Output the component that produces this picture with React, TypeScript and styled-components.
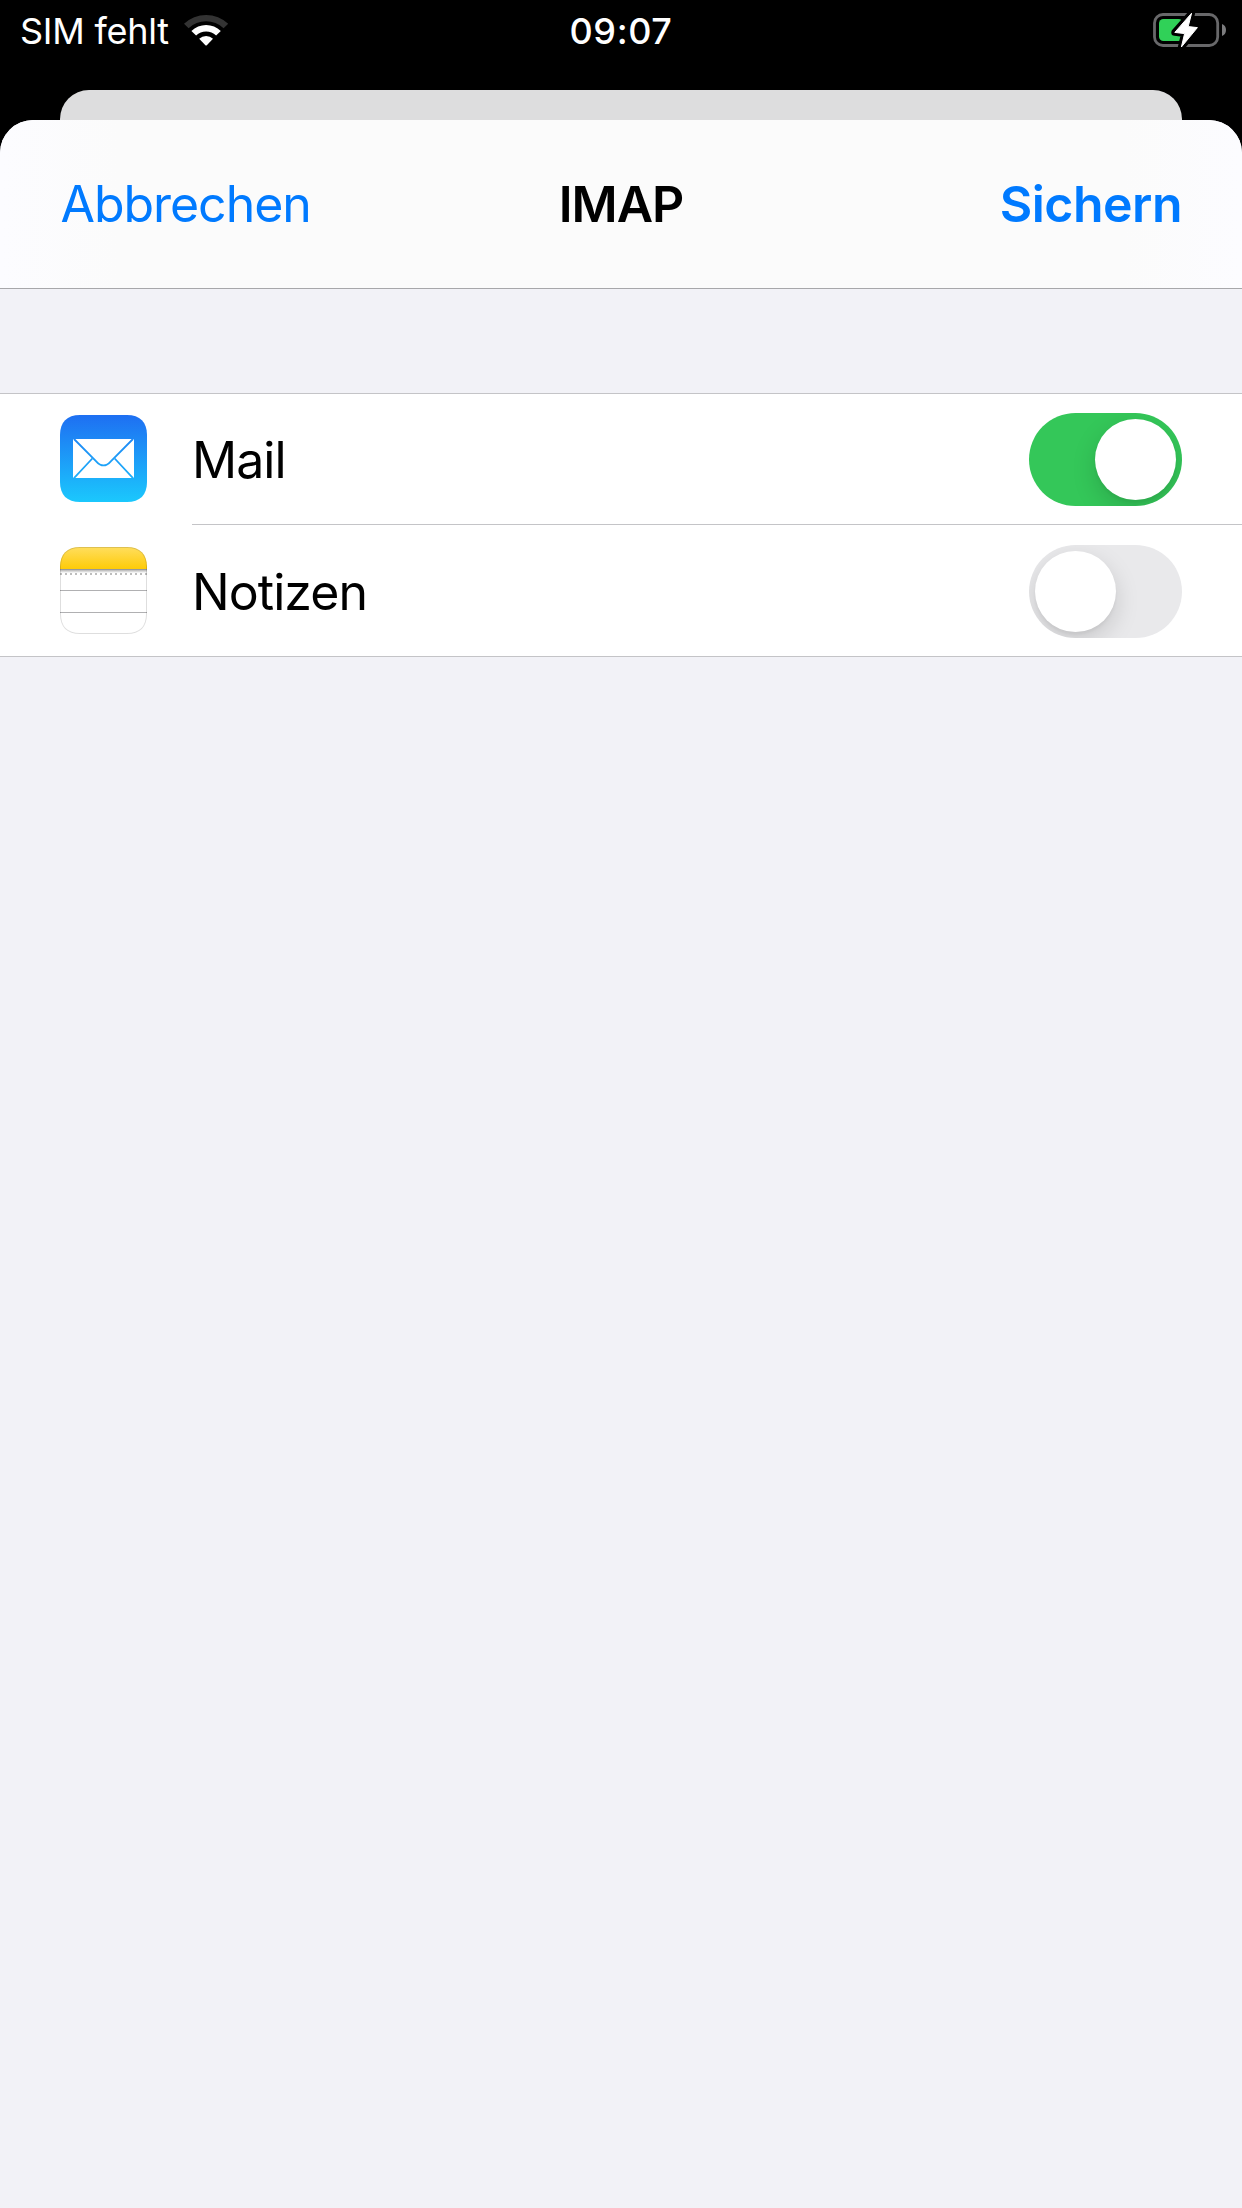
import React, { useState } from "react";
import styled, { createGlobalStyle } from "styled-components";

const GlobalStyle = createGlobalStyle`
  * { box-sizing: border-box; }
  html, body { margin: 0; background: #000; }
`;

const Screen = styled.main`
  display: flex;
  flex-direction: column;
  width: 1242px;
  height: 2208px;
  overflow: hidden;
  background: #000;
  font-family: Inter, "Liberation Sans", sans-serif;
  color: #000;
`;

const StatusBar = styled.header`
  display: grid;
  grid-template-columns: 1fr auto 1fr;
  align-items: center;
  height: 60px;
  margin-bottom: 30px;
  padding: 0 14px 0 20px;
  color: #fff;
  font-size: 36px;
  line-height: 44px;
`;

const Carrier = styled.div`
  display: flex;
  align-items: center;
  gap: 14px;
  letter-spacing: -0.25px;
  white-space: nowrap;
`;

const StatusText = styled.span`
  padding-top: 2px;
`;

const Clock = styled.time`
  padding: 2px 6px 0 0;
  font-weight: 500;
  letter-spacing: 0.6px;
`;

const Battery = styled.div`
  display: flex;
  justify-content: flex-end;
`;

const StatusGlyph = styled.svg`
  display: block;
  flex: none;
`;

const BackCard = styled.div`
  height: 30px;
  flex: none;
  margin: 0 60px;
  border-radius: 29px 29px 0 0;
  background: #ddddde;
`;

const Sheet = styled.section`
  flex: 1;
  border-radius: 33px 33px 0 0;
  overflow: hidden;
  background: #f2f2f7;
`;

const NavBar = styled.nav`
  display: grid;
  grid-template-columns: 1fr auto 1fr;
  align-items: center;
  height: 169px;
  padding: 0 60px;
  border-bottom: 1px solid #a7a7aa;
  background: linear-gradient(90deg, #fcfcff 0, #fbfbfb 120px, #fbfbfb 1122px, #fcfcff 100%);
`;

const NavButton = styled.button<{ $strong?: boolean }>`
  justify-self: ${(p) => (p.$strong ? "end" : "start")};
  padding: 0 0 0 ${(p) => (p.$strong ? 0 : 0.5)}px;
  border: 0;
  background: none;
  color: #007aff;
  font: inherit;
  font-size: 50px;
  line-height: 60px;
  font-weight: ${(p) => (p.$strong ? 600 : 400)};
  letter-spacing: ${(p) => (p.$strong ? "-0.5px" : "-1.05px")};
`;

const Title = styled.h1`
  margin: 0;
  font-size: 50px;
  line-height: 60px;
  font-weight: 600;
  letter-spacing: -1px;
`;

const Group = styled.ul`
  margin: 104px 0 0;
  padding: 0;
  list-style: none;
  background: #fff;
  box-shadow: inset 0 1px #c4c4c7, inset 0 -1px #c4c4c7;
`;

const Row = styled.li`
  display: flex;
  gap: 45px;
  height: 132px;
  padding-left: 60px;
`;

const AppIcon = styled.svg`
  flex: none;
  width: 87px;
  height: 87px;
  margin-top: 22px;
`;

const RowBody = styled.div<{ $divided: boolean }>`
  display: flex;
  flex: 1;
  align-items: flex-start;
  justify-content: space-between;
  padding: 20px 60px 0 0;
  border-bottom: ${(p) => (p.$divided ? "1px solid #c4c4c7" : "0")};
`;

const RowLabel = styled.span`
  padding-top: 17px;
  font-size: 50px;
  line-height: 60px;
  letter-spacing: -0.95px;
`;

const Track = styled.button<{ $on: boolean }>`
  display: flex;
  justify-content: ${(p) => (p.$on ? "flex-end" : "flex-start")};
  width: 153px;
  height: 93px;
  padding: 6px;
  border: 0;
  border-radius: 47px;
  overflow: hidden;
  background: ${(p) => (p.$on ? "#34c759" : "#e9e9eb")};
`;

const Knob = styled.span`
  width: 81px;
  height: 81px;
  border-radius: 50%;
  background: #fff;
  box-shadow: 0 9px 24px rgba(0, 0, 0, 0.15), 0 3px 3px rgba(0, 0, 0, 0.04);
`;

const SQUIRCLE =
  "M20 0H67C80 0 87 7 87 20V67C87 80 80 87 67 87H20C7 87 0 80 0 67V20C0 7 7 0 20 0Z";

function WifiGlyph() {
  return (
    <StatusGlyph width="46" height="34" viewBox="183 13 46 34">
      <path d="M184 23.8A32 32 0 0 1 228.2 23.8L223.6 28.2A25.6 25.6 0 0 0 188.6 28.2Z" fill="#333" />
      <path d="M191.4 31A21 21 0 0 1 220.8 31L216.1 35.6A14.5 14.5 0 0 0 196.1 35.6Z" fill="#fff" />
      <path d="M199.2 38.8A10 10 0 0 1 213 38.8L206.8 45.2Q206.1 45.9 205.4 45.2Z" fill="#fff" />
    </StatusGlyph>
  );
}

function BatteryGlyph() {
  const bolt = "M1191.6 13.2L1188.2 26.6L1197.4 27.6L1181.4 47L1184.6 33.6L1174.8 32.4Z";
  return (
    <StatusGlyph width="75" height="40" viewBox="1153 10 75 40">
      <rect x="1154.5" y="14.5" width="63.2" height="31" rx="8.5" fill="none" stroke="#68686a" strokeWidth="2.8" />
      <path d="M1222 24Q1226 25.6 1226 30Q1226 34.4 1222 36Z" fill="#7b7b7d" />
      <rect x="1159" y="19" width="24" height="22" rx="4.5" fill="#30d158" />
      <path d={bolt} fill="#000" stroke="#000" strokeWidth="7" strokeLinejoin="round" />
      <path d={bolt} fill="#fff" stroke="#fff" strokeWidth="1" strokeLinejoin="round" />
    </StatusGlyph>
  );
}

function MailIcon() {
  return (
    <AppIcon viewBox="0 0 87 87">
      <defs>
        <linearGradient id="mailBlue" x1="0" y1="0" x2="0" y2="1">
          <stop offset="0" stopColor="#1e6ff2" />
          <stop offset="1" stopColor="#1bc8fd" />
        </linearGradient>
        <linearGradient id="mailLine" gradientUnits="userSpaceOnUse" x1="0" y1="0" x2="0" y2="87">
          <stop offset="0" stopColor="#1e6ff2" />
          <stop offset="1" stopColor="#1bc8fd" />
        </linearGradient>
      </defs>
      <path d={SQUIRCLE} fill="url(#mailBlue)" />
      <rect x="13" y="24" width="61" height="39" rx="1" fill="#fff" />
      <g fill="none" stroke="url(#mailLine)" strokeWidth="1.8">
        <path d="M14 24L36.2 46.3Q43.5 54.6 50.8 46.3L73 24" />
        <path d="M14 63.2L32.3 43.5M73 63.2L54.7 43.5" />
      </g>
    </AppIcon>
  );
}

function NotesIcon() {
  return (
    <AppIcon viewBox="0 0 87 87">
      <defs>
        <linearGradient id="notesYellow" x1="0" y1="0" x2="0" y2="1">
          <stop offset="0" stopColor="#ffde5e" />
          <stop offset="1" stopColor="#fecb08" />
        </linearGradient>
        <linearGradient id="notesShade" x1="0" y1="0" x2="0" y2="1">
          <stop offset="0" stopColor="#b5b5b5" />
          <stop offset="1" stopColor="#fff" />
        </linearGradient>
        <clipPath id="notesShape">
          <path d={SQUIRCLE} />
        </clipPath>
      </defs>
      <g clipPath="url(#notesShape)">
        <rect width="87" height="87" fill="#fff" />
        <rect width="87" height="22" fill="url(#notesYellow)" />
        <rect y="22" width="87" height="1" fill="#98989a" />
        <rect y="23" width="87" height="3" fill="url(#notesShade)" />
        <path d="M0 27H87" stroke="#bdbdbd" strokeWidth="2" strokeDasharray="2 3" />
        <path d="M0 43.5H87M0 65.5H87" stroke="#b0b0b2" strokeWidth="1" />
        <path d={SQUIRCLE} fill="none" stroke="#000" strokeOpacity="0.13" strokeWidth="2" />
      </g>
    </AppIcon>
  );
}

const services = [
  { id: "mail", label: "Mail", icon: MailIcon, enabled: true },
  { id: "notes", label: "Notizen", icon: NotesIcon, enabled: false },
];

export default function App() {
  const [enabled, setEnabled] = useState<Record<string, boolean>>(
    Object.fromEntries(services.map((s) => [s.id, s.enabled]))
  );
  return (
    <Screen>
      <GlobalStyle />
      <StatusBar>
        <Carrier>
          <StatusText>SIM fehlt</StatusText>
          <WifiGlyph />
        </Carrier>
        <Clock>09:07</Clock>
        <Battery>
          <BatteryGlyph />
        </Battery>
      </StatusBar>
      <BackCard />
      <Sheet>
        <NavBar>
          <NavButton>Abbrechen</NavButton>
          <Title>IMAP</Title>
          <NavButton $strong>Sichern</NavButton>
        </NavBar>
        <Group>
          {services.map(({ id, label, icon: Icon }, i) => (
            <Row key={id}>
              <Icon />
              <RowBody $divided={i < services.length - 1}>
                <RowLabel>{label}</RowLabel>
                <Track
                  $on={enabled[id]}
                  role="switch"
                  aria-checked={enabled[id]}
                  aria-label={label}
                  onClick={() => setEnabled((e) => ({ ...e, [id]: !e[id] }))}
                >
                  <Knob />
                </Track>
              </RowBody>
            </Row>
          ))}
        </Group>
      </Sheet>
    </Screen>
  );
}
